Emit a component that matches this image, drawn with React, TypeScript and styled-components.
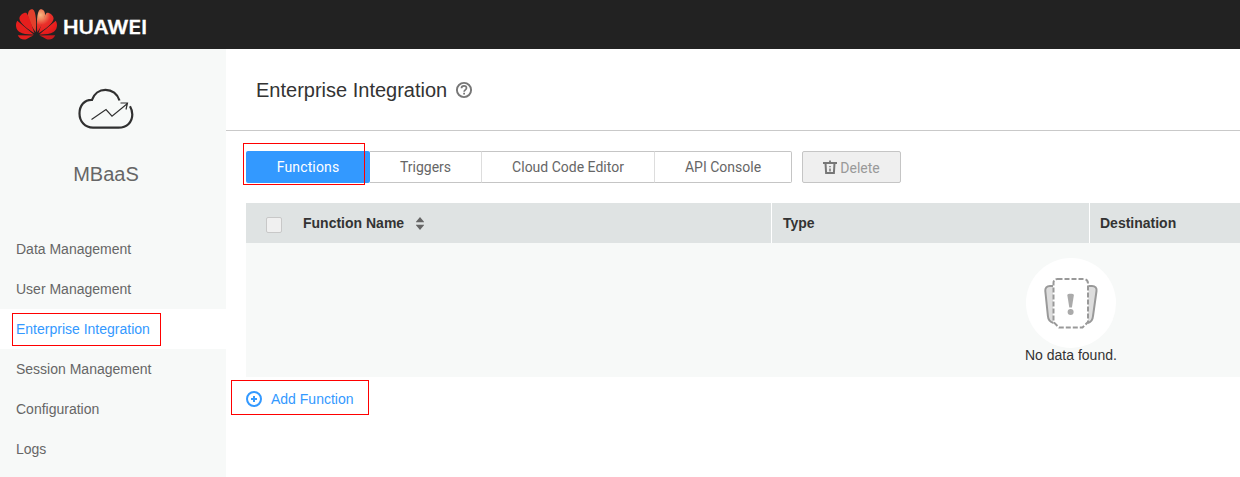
import React from "react";
import styled, { createGlobalStyle, css } from "styled-components";

const GlobalStyle = createGlobalStyle`
  * { box-sizing: border-box; }
  body {
    margin: 0;
    overflow: hidden;
    background: #fff;
    color: #333;
    font: 14px/20px "Liberation Sans", Arial, sans-serif;
  }
  button { font: inherit; cursor: pointer; }
`;

const Page = styled.div`
  display: flex;
  flex-direction: column;
  height: 477px;
`;

const TopBar = styled.header`
  display: flex;
  align-items: center;
  flex: none;
  height: 49px;
  padding-left: 16px;
  background: #222;
`;

const Petals = styled.svg`
  flex: none;
  width: 41px;
  height: 31px;
  overflow: visible;
  fill: url(#petalGlow);
`;

const Wordmark = styled.svg`
  flex: none;
  width: 90px;
  height: 20px;
  margin: 6px 0 0 5px;
  fill: #fff;
  stroke: #fff;
  stroke-width: 0.3px;
  font: 600 18px Inter, sans-serif;
`;

const Body = styled.div`
  display: flex;
  flex: 1;
  min-height: 0;
`;

const Sidebar = styled.aside`
  flex: none;
  width: 226px;
  background: #f7f9f8;
`;

const Product = styled.div`
  display: flex;
  flex-direction: column;
  align-items: center;
  height: 180px;
  padding: 36px 14px 0 0;
`;

const ProductName = styled.div`
  margin-top: 26px;
  color: #666;
  font-size: 20px;
  line-height: 26px;
`;

const NavItem = styled.a<{ $active?: boolean }>`
  display: flex;
  align-items: center;
  height: 40px;
  padding-left: 16px;
  color: ${(p) => (p.$active ? "#3399ff" : "#666")};
  background: ${(p) => (p.$active ? "#fff" : "transparent")};
`;

const Marked = styled.span<{ $inset: string }>`
  position: relative;
  display: inline-flex;
  &::after {
    content: "";
    position: absolute;
    z-index: 1;
    inset: ${(p) => p.$inset};
    border: 1px solid #ff0000;
    pointer-events: none;
  }
`;

const Main = styled.main`
  flex: 1;
  min-width: 0;
`;

const Heading = styled.div`
  display: flex;
  align-items: center;
  gap: 8px;
  height: 82px;
  padding-left: 30px;
  border-bottom: 1px solid #c9c9c9;
`;

const Title = styled.h1`
  margin: 0;
  font-size: 20px;
  font-weight: 400;
  line-height: 26px;
`;

const Toolbar = styled.div`
  display: flex;
  gap: 10px;
  padding: 20px 0 20px 20px;
  font-family: Roboto, sans-serif;
`;

const Tabs = styled.div`
  display: flex;
`;

const Tab = styled.button<{ $width: number; $active?: boolean }>`
  width: ${(p) => p.$width}px;
  height: 32px;
  padding: 0;
  border: 1px solid #c5c5c5;
  border-left: 0;
  border-right-color: #ddd;
  background: #fff;
  color: #666;
  &:last-child {
    border-right-color: #c5c5c5;
    border-radius: 0 2px 2px 0;
  }
  ${(p) =>
    p.$active &&
    css`
      && {
        border: 0;
        border-radius: 2px;
      }
      background: #3399ff;
      color: #fff;
      letter-spacing: 0.15px;
    `}
`;

const DeleteButton = styled.button`
  display: flex;
  align-items: center;
  justify-content: center;
  gap: 3px;
  width: 99px;
  height: 32px;
  padding: 2px 0 0;
  border: 1px solid #c5c5c5;
  border-radius: 2px;
  background: #efefef;
  color: #999;
  svg { margin-bottom: 2px; }
`;

const Table = styled.div`
  margin-left: 20px;
  overflow: hidden;
`;

const HeadRow = styled.div`
  display: grid;
  grid-template-columns: 525px 318px 1fr;
  height: 40px;
  background: #dfe3e3;
  font-weight: 700;
`;

const HeadCell = styled.div`
  display: flex;
  align-items: center;
  padding-left: 11px;
  border-left: 1px solid #fff;
  &:first-child {
    padding-left: 20px;
    border-left: 0;
  }
  &:last-child {
    padding-left: 10px;
  }
`;

const Checkbox = styled.span`
  width: 16px;
  height: 16px;
  margin: 4px 21px 0 0;
  border: 1px solid #c8c8c8;
  border-radius: 2px;
  background: #f0f0f0;
`;

const SortIcon = styled.svg`
  margin-left: 12px;
`;

const Empty = styled.div`
  display: flex;
  flex-direction: column;
  align-items: flex-start;
  height: 134px;
  padding: 15px 0 0 779px;
  background: #f7f9f8;
`;

const EmptyArt = styled.svg`
  margin-left: 1px;
`;

const EmptyText = styled.div`
  margin-top: -3px;
`;

const AddLink = styled.a`
  display: inline-flex;
  align-items: center;
  gap: 9px;
  color: #3399ff;
`;

const AddRow = styled.div`
  display: flex;
  padding: 12px 0 0 20px;
`;

const nav = ["Data Management", "User Management", "Enterprise Integration", "Session Management", "Configuration", "Logs"];

const petalPaths = [
  "M21.300 23.300C20.700 16 20.300 2.500 24.300.2c2.700-.5 5.200 2.300 4.700 6.500C28.300 12 24.300 18.800 21.300 23.300z",
  "M22.500 24.200C25 17 27.500 8 30.500 3.900c3-.6 7 2.400 7.100 5.700C37.600 14 28.500 20.800 22.500 24.200z",
  "M23.200 25.400C29 21 36 15 39.800 11.800c2.200 3.500 1.400 9-2.300 11.300-3.500 2.300-9.500 2.400-14.300 2.300z",
  "M23.500 26.500 39.200 26.300c-1.500 3.900-6 5.200-9 3.600-2.300-1.300-4.700-2.400-6.700-3.400z",
];

export default function App() {
  return (
    <Page>
      <GlobalStyle />
      <TopBar>
        <Petals viewBox="0 0 41 31">
          <defs>
            <radialGradient id="petalGlow" gradientUnits="userSpaceOnUse" cx="24.500" cy="6" r="24">
              <stop offset="0" stopColor="#f9b882" />
              <stop offset="0.2" stopColor="#f0805a" />
              <stop offset="0.42" stopColor="#e8302a" />
              <stop offset="0.75" stopColor="#e81c1c" />
              <stop offset="1" stopColor="#c9181c" />
            </radialGradient>
          </defs>
          {petalPaths.map((d) => (
            <path key={d} d={d} />
          ))}
          {petalPaths.map((d) => (
            <path key={d + "m"} d={d} transform="matrix(-1 0 0 1 41 0)" fill={d === petalPaths[0] ? "#e2402c" : "#e61e1d"} />
          ))}
        </Petals>
        <Wordmark>
          <text x="1" y="16" textLength="84" lengthAdjust="spacingAndGlyphs">HUAWEI</text>
        </Wordmark>
      </TopBar>
      <Body>
        <Sidebar>
          <Product>
            <svg width="58" height="50" viewBox="0 0 58 50" fill="none" stroke="#303030">
              <path d="M42.500 15.500C40.500 9 35 4.800 28.500 4.800c-6.300 0-11.500 4-13.500 10C7.500 14.500 2.500 20.500 2.500 28.500 2.500 36.500 8 42.700 16 42.700h25.500c8.500 0 13.800-5.700 13.800-13.200 0-3-.8-5.800-2.300-8.300" strokeWidth="2.200" />
              <path d="m14.500 34.500 14.500-10 6 6.700L50.500 18.500M43.500 18h7l-1.500 6.500" strokeWidth="1.200" />
            </svg>
            <ProductName>MBaaS</ProductName>
          </Product>
          {nav.map((name) => {
            const active = name === "Enterprise Integration";
            return (
              <NavItem key={name} $active={active}>
                {active ? <Marked $inset="-6px -11px -7px -4px">{name}</Marked> : name}
              </NavItem>
            );
          })}
        </Sidebar>
        <Main>
          <Heading>
            <Title>Enterprise Integration</Title>
            <svg width="18" height="18" viewBox="0 0 18 18" fill="none" stroke="#777" strokeWidth="1.900">
              <circle cx="9" cy="9" r="7.100" />
              <path d="M6.500 7.200c0-1.500 1-2.400 2.500-2.400s2.500.9 2.500 2.200c0 1.700-2.400 1.900-2.400 3.700" strokeWidth="1.700" />
              <path d="M9.100 11.800v1.700" strokeWidth="1.800" />
            </svg>
          </Heading>
          <Toolbar>
            <Tabs>
              <Marked $inset="-8px 5px -2px -3px">
                <Tab $width={124} $active>Functions</Tab>
              </Marked>
              <Tab $width={112}>Triggers</Tab>
              <Tab $width={173}>Cloud Code Editor</Tab>
              <Tab $width={137}>API Console</Tab>
            </Tabs>
            <DeleteButton>
              <svg width="14" height="15" viewBox="0 0 14 15" fill="none" stroke="#777">
                <path d="M0 3h14M7 .5V3" strokeWidth="1.800" />
                <path d="M2.500 3 3.100 13h7.800L11.500 3" strokeWidth="2" />
                <path d="M7 6v1.200M7 8.500v3" strokeWidth="1.500" />
              </svg>
              Delete
            </DeleteButton>
          </Toolbar>
          <Table>
            <HeadRow>
              <HeadCell>
                <Checkbox />
                Function Name
                <SortIcon width="8" height="13" viewBox="0 0 8 13" fill="#666">
                  <path d="M4 0 8.300 5.200H-.3zM4 13-.3 7.800h8.600z" />
                </SortIcon>
              </HeadCell>
              <HeadCell>Type</HeadCell>
              <HeadCell>Destination</HeadCell>
            </HeadRow>
            <Empty>
              <EmptyArt width="90" height="90" viewBox="0 0 90 90" fill="none" stroke="#999" strokeWidth="2">
                <circle cx="45" cy="45" r="45" fill="#fff" stroke="none" />
                <path d="M27 28h-3c-3.300 0-5 2-4.700 5l2.600 25c.3 4 1.600 6 5.600 7M62.500 28h3.500c3.300 0 5 2 4.500 5L67 58c-.3 4-1.500 6-5 7" fill="#ddd" />
                <path d="M31.500 21h26c2.700 0 4.500 1.700 4.500 4.500v38.500l-5.500 5.500H33L27.500 64V25c0-2.500 1.500-4 4-4z" fill="#fff" strokeDasharray="5 2" />
                <path d="M41.300 37c0-1.600 6.600-1.600 6.600 0l-2 12.500h-2.600z" fill="#aaa" stroke="none" />
                <circle cx="44.600" cy="54" r="3" fill="#aaa" stroke="none" />
              </EmptyArt>
              <EmptyText>No data found.</EmptyText>
            </Empty>
          </Table>
          <AddRow>
            <Marked $inset="-9px -15px -6px -15px">
              <AddLink>
                <svg width="16" height="16" viewBox="0 0 16 16" fill="none" stroke="#3399ff" strokeWidth="2">
                  <circle cx="8" cy="8" r="7" />
                  <path d="M5 8h6M8 5v6" />
                </svg>
                Add Function
              </AddLink>
            </Marked>
          </AddRow>
        </Main>
      </Body>
    </Page>
  );
}
